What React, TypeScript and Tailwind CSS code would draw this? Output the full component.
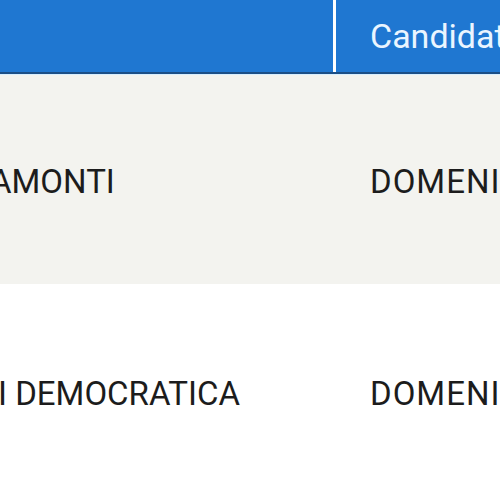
import React from 'react';

const rows = [
  { lista: 'TRAMONTI', lead: '-ml-[50px]', candidato: 'DOMENICO', bg: 'bg-[#f3f3ef]', h: 'h-[210px] pt-[4px] border-t border-[#d8efff]' },
  { lista: 'I DEMOCRATICA', lead: '-ml-[2px]', candidato: 'DOMENICO', bg: 'bg-white', h: 'h-[220px]' },
];

const App = () => {
  return (
    <div className="w-[500px] h-[500px] overflow-hidden bg-white font-['Roboto',sans-serif]">
      <div className="w-[700px]">
        {/* Header */}
        <div className="flex h-[74px] bg-[#1f77d1] border-b-2 border-[#1b4e86]">
          <div className="w-[333px]" />
          <div className="flex items-center pl-[34px] border-l-[3px] border-white text-[34px] text-[#eaf5ff] whitespace-nowrap">
            Candidato
          </div>
        </div>

        {/* Rows */}
        {rows.map((row, i) => (
          <div key={i} className={`flex items-center ${row.h} ${row.bg}`}>
            <div className="w-[336px] overflow-hidden">
              <div className={`${row.lead} text-[33px] text-[#1c1c1c] whitespace-nowrap`}>{row.lista}</div>
            </div>
            <div className="pl-[34px] text-[33px] tracking-[1px] text-[#1c1c1c] whitespace-nowrap">{row.candidato}</div>
          </div>
        ))}
      </div>
    </div>
  );
};

export default App;
